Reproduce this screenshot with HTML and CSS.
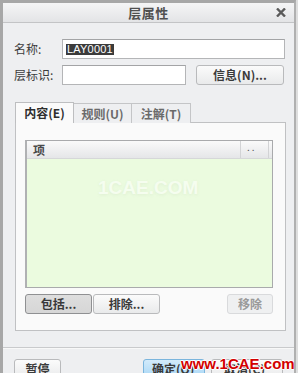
FILE: index.html
```html
<!DOCTYPE html>
<html>
<head>
<meta charset="utf-8">
<link rel="stylesheet" href="styles.css">
</head>
<body>
<div class="win">
  <div class="titlebar">
    <span class="title">层属性</span>
    <svg class="close" width="10" height="9" viewBox="0 0 10 9"><path d="M1 0.5 L9 8.5 M9 0.5 L1 8.5" stroke="#5a5a5a" stroke-width="2.4" fill="none"/></svg>
  </div>
  <div class="content">
    <div class="row">
      <span class="label">名称:</span>
      <div class="input wide"><span class="sel">LAY0001</span></div>
    </div>
    <div class="row row2">
      <span class="label">层标识:</span>
      <div class="input short"></div>
      <div class="btn info">信息(N)...</div>
    </div>
    <div class="tabs">
      <div class="tab active">内容(E)</div>
      <div class="tab t2">规则(U)</div>
      <div class="tab t3">注解(T)</div>
    </div>
    <div class="panel">
      <div class="list">
        <div class="lhead">
          <span class="c1">项</span>
          <span class="c2">..</span>
          <span class="c3"></span>
        </div>
        <div class="lbody"><span class="wm">1CAE.COM</span></div>
      </div>
      <div class="btnrow">
        <div class="btn pressed w67">包括...</div>
        <div class="btn w67 b2">排除...</div>
        <div class="btn disabled remove">移除</div>
      </div>
    </div>
  </div>
  <div class="sep"></div>
  <div class="footer">
    <div class="btn pause">暂停</div>
    <div class="btn ok">确定(O)</div>
    <div class="btn cancel">取消(C)</div>
  </div>
  <div class="watermark">www.1CAE.com</div>
</div>
</body>
</html>
```
FILE: styles.css
```css
* { box-sizing: border-box; }
html, body { margin: 0; padding: 0; }
body {
  width: 298px;
  height: 373px;
  background: #dedede;
  font-family: "Noto Sans CJK SC", "Liberation Sans", sans-serif;
  font-size: 12px;
  color: #3a3a3a;
  overflow: hidden;
}
.win {
  position: relative;
  width: 296px;
  height: 373px;
  background: #eeeff1;
  border-top: 3px solid #a7a7a7;
  border-left: 3px solid #a7a7a7;
  border-right: 2px solid #b0b0b0;
  overflow: hidden;
  display: flex;
  flex-direction: column;
}
.titlebar {
  height: 20px;
  flex: none;
  background: linear-gradient(#f5f5f6, #e3e4e6);
  border-bottom: 1px solid #c3c4c6;
  display: flex;
  align-items: center;
  justify-content: center;
  position: relative;
}
.title {
  font-size: 13px;
  font-weight: bold;
  color: #505050;
  line-height: 19px;
  letter-spacing: 0.5px;
}
.close {
  position: absolute;
  right: 8px;
  top: 5px;
}
.content {
  padding: 16px 9px 0 11px;
  flex: none;
}
.row {
  display: flex;
  align-items: center;
  height: 20px;
}
.row2 { margin-top: 6px; }
.label {
  width: 48px;
  flex: none;
  line-height: 20px;
  color: #3c3c3c;
}
.input {
  height: 20px;
  background: #fff;
  border: 1px solid #b4b5b7;
  border-top-color: #a3a4a6;
  display: flex;
  align-items: center;
  padding-left: 3px;
}
.input.wide { width: 223px; }
.input.short { width: 124px; }
.sel {
  background: #3b3b3b;
  color: #fff;
  font-family: "Liberation Sans", sans-serif;
  font-size: 11px;
  line-height: 11px;
  height: 11px;
  padding: 0 1px;
  letter-spacing: 0.2px;
}
.btn {
  height: 20px;
  border: 1px solid #b9babc;
  border-radius: 3px;
  background: linear-gradient(#fbfbfb, #e9eaeb);
  display: flex;
  align-items: center;
  justify-content: center;
  font-weight: bold;
  color: #3a3a3a;
  line-height: 18px;
  flex: none;
}
.info { width: 88px; margin-left: 10px; height: 20px; }
.tabs {
  margin-top: 17px;
  margin-left: 1px;
  height: 21px;
  margin-bottom: -1px;
  display: flex;
  align-items: flex-end;
  position: relative;
  z-index: 2;
}
.tab {
  height: 20px;
  border: 1px solid #c4c5c7;
  border-bottom: none;
  background: #eeeff1;
  display: flex;
  align-items: center;
  justify-content: center;
  font-weight: bold;
  color: #6a6a6a;
  line-height: 18px;
}
.tab.active {
  width: 59px;
  height: 21px;
  background: #fafafa;
  color: #2e2e2e;
  border-color: #bdbec0;
}
.tab.t2 { width: 58px; border-left: none; }
.tab.t3 { width: 59px; border-left: none; }
.panel {
  margin-left: 1px;
  margin-right: -1px;
  height: 209px;
  background: #fafafa;
  border: 1px solid #c0c1c3;
  padding: 17px 12px 16px 9px;
  position: relative;
  z-index: 1;
}
.list {
  width: 248px;
  height: 148px;
  border: 1px solid #a9aaac;
  border-left: 2px solid #b0b1b3;
  display: flex;
  flex-direction: column;
}
.lhead {
  height: 18px;
  flex: none;
  background: linear-gradient(#fafafa, #e5e6e8);
  border-bottom: 1px solid #d6d7d9;
  display: flex;
  align-items: center;
}
.c1 {
  flex: 1;
  padding-left: 6px;
  font-weight: bold;
  color: #4a4a4a;
  line-height: 17px;
}
.c2 {
  width: 28px;
  height: 17px;
  border-left: 1px solid #d2d3d5;
  font-size: 10px;
  line-height: 12px;
  padding-left: 6px;
  color: #555;
  letter-spacing: 2px;
}
.c3 {
  width: 4px;
  height: 17px;
  border-left: 1px solid #d2d3d5;
}
.lbody {
  flex: 1;
  background: #ebfbdf;
  position: relative;
}
.wm {
  position: absolute;
  left: 71px;
  top: 18px;
  font-family: "Liberation Sans", sans-serif;
  font-weight: bold;
  font-size: 19px;
  color: #f5fdef;
  text-shadow: 0 1px 3px rgba(170, 190, 160, 0.18);
}
.btnrow {
  margin-top: 6px;
  display: flex;
  width: 248px;
}
.w67 { width: 67px; }
.b2 { margin-left: 1px; }
.pressed {
  background: linear-gradient(#dedede, #d6d6d6);
  border-color: #8f9092;
}
.disabled {
  background: #eff0f1;
  border-color: #d9dadc;
  color: #9a9a9a;
}
.remove { width: 46px; margin-left: auto; }
.sep {
  margin-top: 16px;
  height: 2px;
  flex: none;
  border-top: 1px solid #c9cacc;
  border-bottom: 1px solid #f8f8f8;
}
.footer {
  padding: 10px 0 0 11px;
  display: flex;
  flex: none;
}
.pause { width: 47px; }
.ok {
  width: 62px;
  margin-left: 82px;
  background: linear-gradient(#d3ebfb, #a7d6f5);
  border-color: #7bb5dd;
  justify-content: flex-start;
  padding-left: 8px;
}
.cancel { width: 72px; margin-left: 6px; justify-content: flex-start; padding-left: 12px; }
.watermark {
  position: absolute;
  left: 178px;
  top: 352px;
  font-family: "Liberation Sans", sans-serif;
  font-weight: bold;
  font-size: 15px;
  color: #d30000;
  text-shadow: 1px 0 0 #fff, -1px 0 0 #fff, 0 1px 0 #fff, 0 -1px 0 #fff;
  z-index: 5;
}
```
